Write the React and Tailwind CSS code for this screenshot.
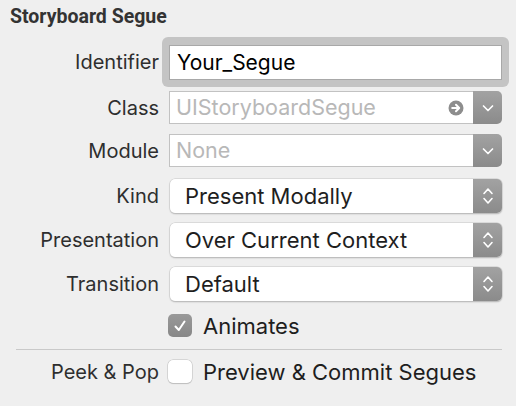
import React from 'react';

const font = { fontFamily: 'Inter, "Liberation Sans", sans-serif' };

const Label = ({ children }) => (
    <div className="w-[159px] shrink-0 text-right text-[20px] text-[#2e2e2e] leading-none">{children}</div>
);

const Chevron = () => (
    <svg width="14" height="10" viewBox="0 0 14 10">
        <path d="M2.5 3 L7 7.5 L11.5 3" fill="none" stroke="white" strokeWidth="1.7" strokeLinecap="round" strokeLinejoin="round" />
    </svg>
);

const UpDown = () => (
    <svg width="14" height="22" viewBox="0 0 14 22">
        <path d="M3 8.5 L7 4 L11 8.5" fill="none" stroke="white" strokeWidth="1.6" strokeLinecap="round" strokeLinejoin="round" />
        <path d="M3 13.5 L7 18 L11 13.5" fill="none" stroke="white" strokeWidth="1.6" strokeLinecap="round" strokeLinejoin="round" />
    </svg>
);

const ComboField = ({ text, arrow }) => (
    <div className="ml-[10px] w-[333px] h-[33px] flex">
        <div className="flex-1 flex items-center bg-white border border-[#c2c2c2] border-r-0 pl-[6px] pr-[9px]">
            <span className="flex-1 text-[21.5px] text-[#b8b8b8] leading-none">{text}</span>
            {arrow && (
                <svg width="16" height="16" viewBox="0 0 16 16">
                    <circle cx="8" cy="8" r="7.5" fill="#8d8d8d" />
                    <path d="M4.2 8 H11 M8 4.8 L11.2 8 L8 11.2" fill="none" stroke="white" strokeWidth="2" strokeLinecap="round" strokeLinejoin="round" />
                </svg>
            )}
        </div>
        <div className="w-[29px] rounded-r-[5px] bg-gradient-to-b from-[#a2a2a2] to-[#8b8b8b] flex items-center justify-center">
            <Chevron />
        </div>
    </div>
);

const Popup = ({ text }) => (
    <div className="ml-[11px] w-[332px] h-[34px] flex rounded-[5px] bg-white shadow-[0_0_0_0.5px_#c8c8c8,0_1px_1.5px_rgba(0,0,0,0.3)] overflow-hidden">
        <div className="flex-1 flex items-center pl-[15px] text-[22px] text-[#1e1e1e] leading-none">{text}</div>
        <div className="w-[29px] bg-gradient-to-b from-[#a2a2a2] to-[#8b8b8b] flex items-center justify-center">
            <UpDown />
        </div>
    </div>
);

const App = () => {
    return (
        <div className="w-[516px] h-[406px] bg-[#efefef] overflow-hidden" style={font}>
            <div className="pl-[10px] pt-[7px] h-[37px] text-[19.5px] font-bold text-[#333333] leading-none font-[Roboto]">
                Storyboard Segue
            </div>

            {/* Identifier */}
            <div className="flex items-center h-[50px]">
                <Label>Identifier</Label>
                <div className="ml-[3px] w-[347px] h-[50px] rounded-[6px] bg-[#c4c4c4] pl-[7px] pt-[8px]">
                    <div className="w-[333px] h-[35px] bg-white border border-[#a8a8a8] flex items-center pl-[7px] text-[21px] text-black leading-none">
                        Your_Segue
                    </div>
                </div>
            </div>

            <div className="flex items-center mt-[4px]">
                <Label>Class</Label>
                <ComboField text="UIStoryboardSegue" arrow />
            </div>

            <div className="flex items-center mt-[10px]">
                <Label>Module</Label>
                <ComboField text="None" />
            </div>

            <div className="flex items-center mt-[12px]">
                <Label>Kind</Label>
                <Popup text="Present Modally" />
            </div>
            <div className="flex items-center mt-[10px]">
                <Label>Presentation</Label>
                <Popup text="Over Current Context" />
            </div>
            <div className="flex items-center mt-[10px]">
                <Label>Transition</Label>
                <Popup text="Default" />
            </div>

            <div className="flex items-center mt-[13px] h-[23px]">
                <div className="w-[168px] shrink-0" />
                <div className="w-[24px] h-[23px] rounded-[5px] bg-gradient-to-b from-[#999999] to-[#878787] flex items-center justify-center">
                    <svg width="16" height="16" viewBox="0 0 16 16">
                        <path d="M3.5 8.5 L6.8 12 L12.5 3.5" fill="none" stroke="white" strokeWidth="2" strokeLinecap="round" strokeLinejoin="round" />
                    </svg>
                </div>
                <span className="ml-[11px] text-[22px] text-[#1e1e1e] leading-none">Animates</span>
            </div>

            <div className="mt-[12px] ml-[16px] w-[486px] h-px bg-[#c9c9c9]" />

            <div className="flex items-center mt-[10px] h-[23px]">
                <Label>Peek &amp; Pop</Label>
                <div className="ml-[9px] w-[24px] h-[23px] rounded-[5px] bg-white shadow-[0_0_0_0.5px_#bdbdbd,0_1px_1px_rgba(0,0,0,0.2)]" />
                <span className="ml-[11px] text-[22px] text-[#1e1e1e] leading-none">Preview &amp; Commit Segues</span>
            </div>
        </div>
    );
};

export default App;
